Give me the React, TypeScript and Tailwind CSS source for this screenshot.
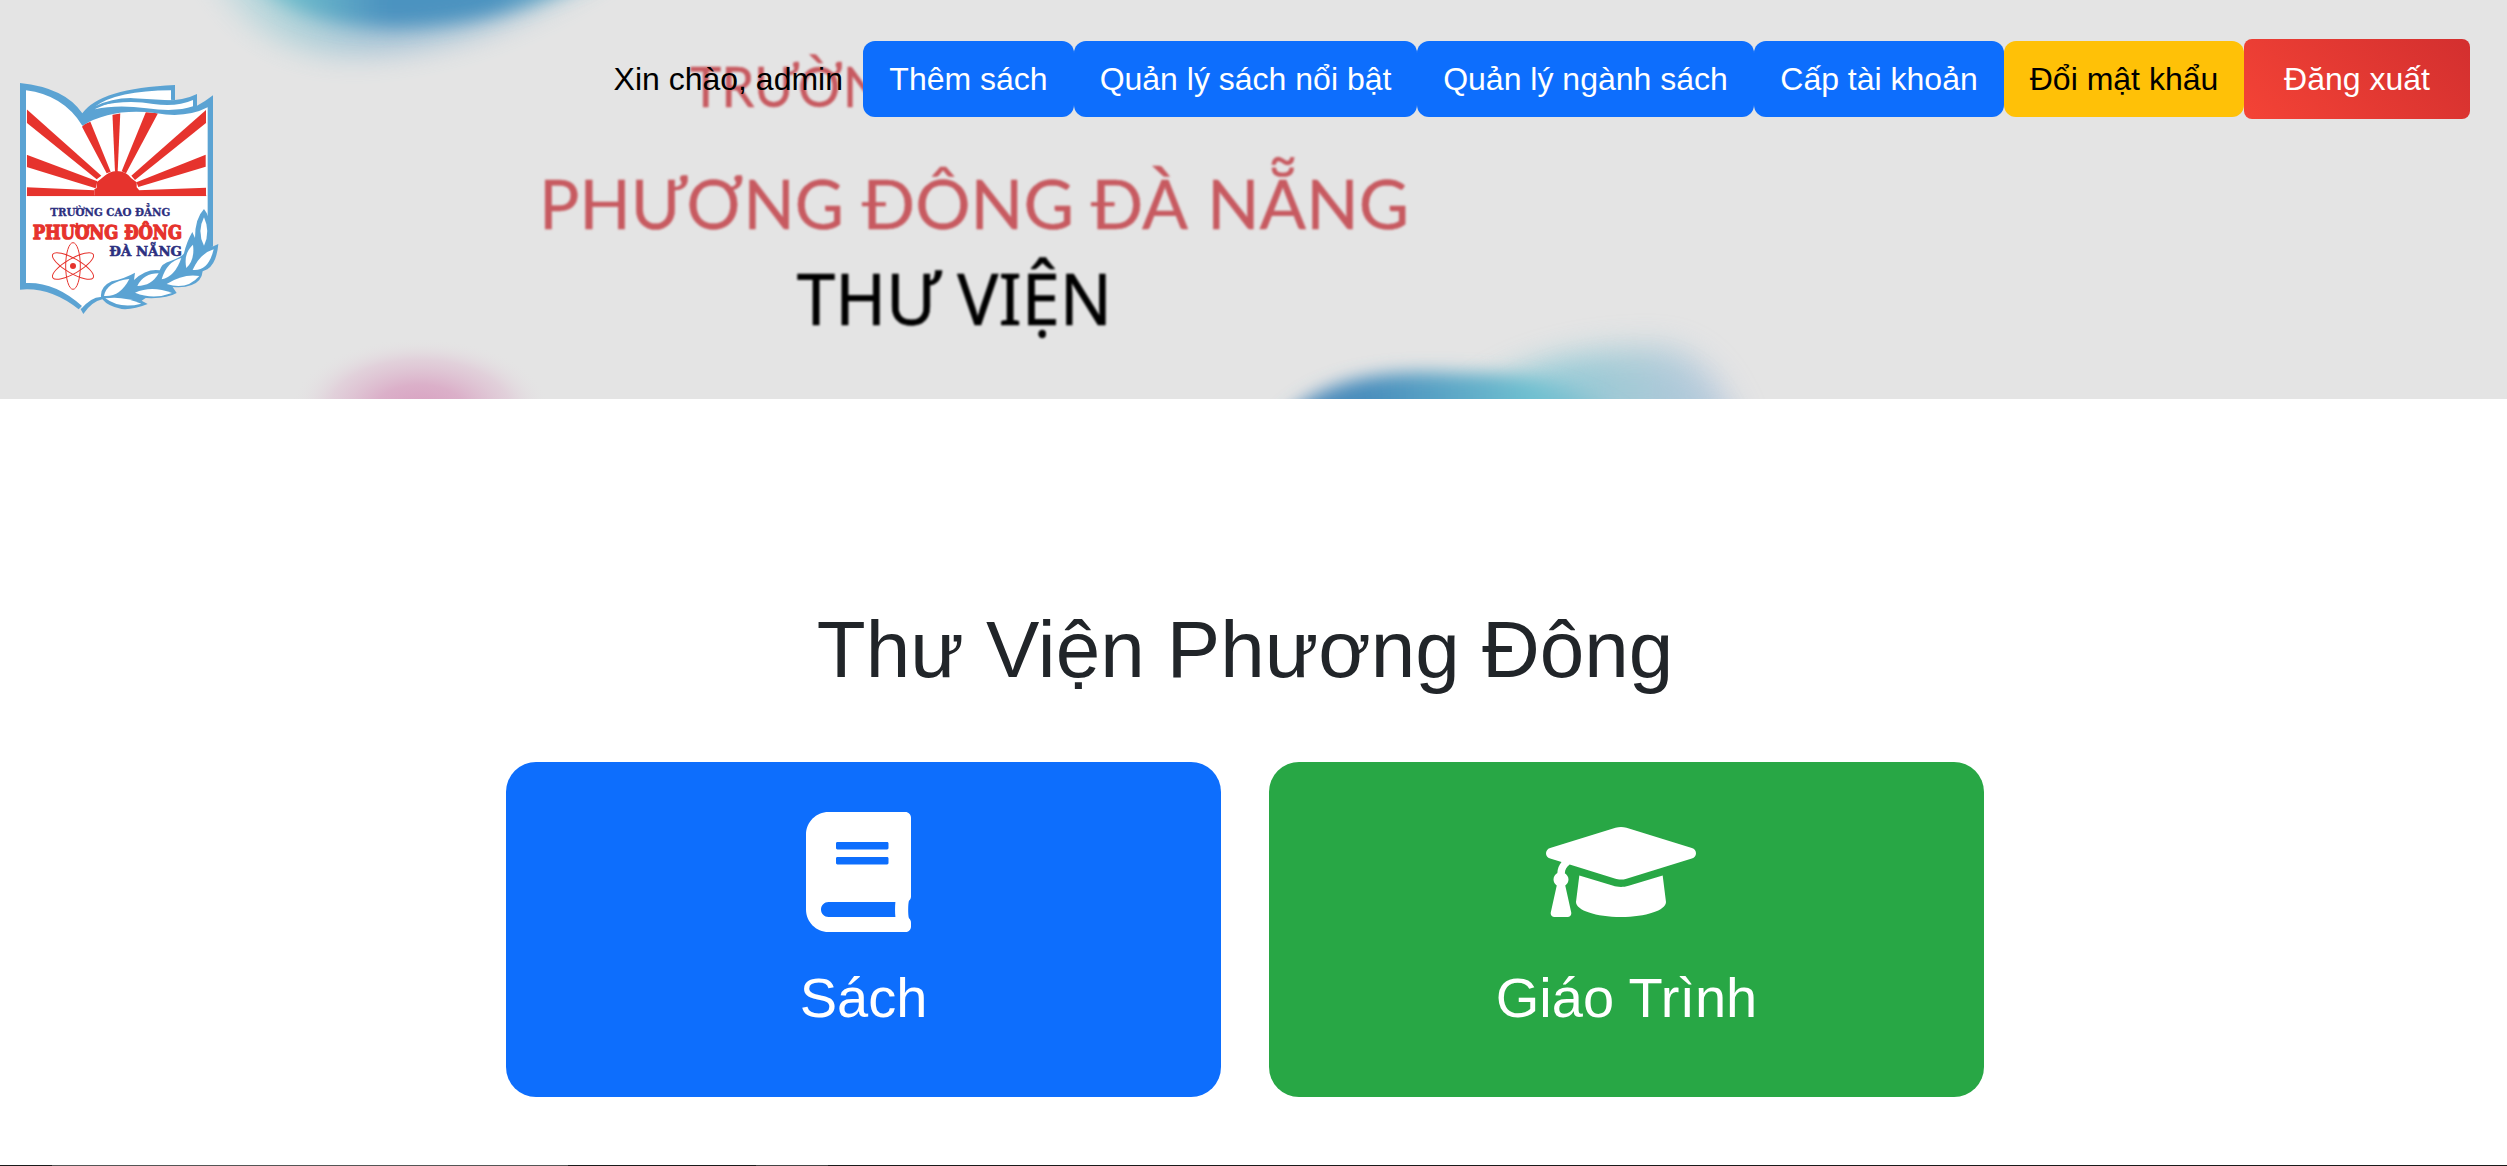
import { FaBook, FaGraduationCap } from "react-icons/fa";

const RED = "#e6332d";
const NAVY = "#2d3080";
const BLUE = "#5ba3d3";

/* Sun rays, fanning out from the half disc at the bottom of the sky */
const RAYS = [
  "M80 148 L80 188 L290 358 L304 347 Z",
  "M80 284 L80 321 L287 385 L292 364 Z",
  "M80 382 L80 409 L283 409 L283 391 Z",
  "M246 200 L268 178 L332 335 L320 340 Z",
  "M337 155 L361 155 L353 335 L345 335 Z",
  "M438 155 L474 160 L378 340 L365 334 Z",
  "M618 150 L618 189 L405 360 L394 347 Z",
  "M617 284 L617 320 L415 381 L409 367 Z",
  "M618 383 L618 409 L415 409 L415 391 Z",
];

function Logo() {
  return (
    <svg viewBox="60 60 610 710" className="h-[236.67px] w-[203.33px]">
      <defs>
        <clipPath id="sky">
          <path d="M80 92 Q190 105 247 195 Q360 140 490 162 Q560 175 620 140 V409 H80 Z" />
        </clipPath>
      </defs>
      <path d="M250 160 Q320 85 513 90 V125 Q570 125 580 120 V140 L600 150 Q430 180 250 170 Z" fill="#fff" />
      <path d="M68 80 Q190 90 246 180 Q370 130 480 157 Q570 170 630 122 V500 L610 620 L480 690 L300 715 L248 745 Q150 670 68 678 Z" fill="#fff" />
      <g clipPath="url(#sky)" fill={RED}>
        {RAYS.map((d) => (
          <path key={d} d={d} />
        ))}
        <path d="M283 409 V388 L290 384 V367 L305 355 Q328 333 350 333 Q378 333 394 355 L410 367 V382 L417 390 V409 Z" />
        <rect x="80" y="406" width="540" height="4" />
      </g>
      {/* book outline */}
      <path d="M60 69 Q195 83 247 160 Q300 85 525 75 V121 L513 119 V91 Q350 92 285 140 Q370 110 450 120 Q540 128 591 102 V137 Q615 125 639 106 V560 H623 V142 Q560 175 470 160 Q340 142 247 197 Q190 105 78 91 V669 Q165 665 246 738 L236 748 Q150 680 60 689 Z" fill={BLUE} />
      <path d="M295 138 Q380 118 460 132 Q530 142 579 120 V139 Q530 157 440 145 Q350 133 285 148 Z" fill="#fff" />
      <path d="M285 143 Q340 116 400 118 L520 125" fill="none" stroke={BLUE} strokeWidth="7" />
      {/* laurel branch */}
      <path d="M242 748 Q275 710 303 711 Q300 680 335 664 Q375 655 405 638 L402 660 Q440 625 479 631 Q485 610 512 603 Q548 590 552 580 Q560 545 577 516 L585 534 Q585 475 612 447 Q630 470 628 500 Q640 530 635 561 L655 552 Q650 610 622 628 L608 634 Q605 665 575 675 Q550 685 518 681 L530 699 Q500 717 437 714 L425 722 L443 732 Q400 750 365 747 Q325 740 307 718 Q275 725 250 762 Z" fill={BLUE} />
      <g fill="#fff">
        <path d="M612 472 Q632 515 612 557 Q590 515 612 472 Z" />
        <path d="M579 554 Q585 600 559 624 Q550 580 579 554 Z" />
        <path d="M641 568 Q600 580 578 630 Q625 635 641 568 Z" />
        <path d="M544 594 Q500 605 485 658 Q525 650 544 594 Z" />
        <path d="M598 648 Q550 640 500 672 Q560 692 598 648 Z" />
        <path d="M476 640 Q430 640 412 678 Q455 678 476 640 Z" />
        <path d="M388 657 Q320 665 312 708 Q360 712 388 657 Z" />
        <path d="M516 699 Q455 675 405 698 Q460 720 516 699 Z" />
        <path d="M424 731 Q370 707 316 715 Q360 748 424 731 Z" />
      </g>
      {/* atom */}
      <g fill="none" stroke={RED} strokeWidth="3">
        <ellipse cx="219" cy="618" rx="22" ry="70" />
        <ellipse cx="219" cy="618" rx="22" ry="70" transform="rotate(60 219 618)" />
        <ellipse cx="219" cy="618" rx="22" ry="70" transform="rotate(-60 219 618)" />
      </g>
      <circle cx="219" cy="618" r="9" fill={RED} />
      <g fontFamily="'DejaVu Serif', serif" fontWeight="700">
        <text x="151" y="469" fontSize="34" fill={NAVY} stroke={NAVY} strokeWidth="1" textLength="360" lengthAdjust="spacingAndGlyphs">TRƯỜNG CAO ĐẲNG</text>
        <text x="98" y="536" fontSize="58" fill={RED} stroke={RED} strokeWidth="4" strokeLinejoin="round" textLength="448" lengthAdjust="spacingAndGlyphs">PHƯƠNG ĐÔNG</text>
        <text x="328" y="587" fontSize="38" fill={NAVY} stroke={NAVY} strokeWidth="1.5" textLength="218" lengthAdjust="spacingAndGlyphs">ĐÀ NẴNG</text>
      </g>
    </svg>
  );
}

function BannerArt() {
  return (
    <svg viewBox="0 0 2507 399" className="absolute inset-0 h-full w-full" aria-hidden="true">
      <defs>
        <linearGradient id="top" x1="200" x2="610" y1="0" y2="0" gradientUnits="userSpaceOnUse">
          <stop offset="0" stopColor="#a5d5dc" />
          <stop offset="0.22" stopColor="#6fbccb" />
          <stop offset="0.45" stopColor="#4c93c0" />
          <stop offset="0.72" stopColor="#4c93c0" />
          <stop offset="1" stopColor="#74b8cc" />
        </linearGradient>
        <linearGradient id="bottom" x1="1280" x2="1740" y1="0" y2="0" gradientUnits="userSpaceOnUse">
          <stop offset="0" stopColor="#4a84b8" />
          <stop offset="0.2" stopColor="#4a8fbd" />
          <stop offset="0.55" stopColor="#6fc0d0" />
          <stop offset="0.75" stopColor="#93c3d2" />
          <stop offset="1" stopColor="#b0c1dc" />
        </linearGradient>
        <radialGradient id="pink">
          <stop offset="0" stopColor="#d89fc0" />
          <stop offset="0.35" stopColor="#dbb0c9" />
          <stop offset="0.7" stopColor="#e0cad7" stopOpacity="0.75" />
          <stop offset="1" stopColor="#e4e4e4" stopOpacity="0" />
        </radialGradient>
        <filter id="soft" x="-30%" y="-60%" width="160%" height="220%">
          <feGaussianBlur stdDeviation="9" />
        </filter>
        <filter id="softer" x="-30%" y="-60%" width="160%" height="220%">
          <feGaussianBlur stdDeviation="15" />
        </filter>
        <filter id="text" x="-5%" y="-20%" width="110%" height="140%">
          <feGaussianBlur stdDeviation="0.9" />
        </filter>
      </defs>
      <path d="M205 -40 C235 20 280 54 360 53 C450 48 530 20 620 -40 Z" fill="url(#top)" opacity="0.45" filter="url(#softer)" />
      <path d="M230 -50 C265 10 320 27 400 27 C470 24 530 10 620 -35 Z" fill="url(#top)" filter="url(#soft)" />
      <ellipse cx="420" cy="410" rx="130" ry="72" fill="url(#pink)" />
      <path d="M1440 440 C1470 375 1560 345 1660 346 C1700 350 1725 380 1745 440 Z" fill="url(#bottom)" opacity="0.6" filter="url(#softer)" />
      <path d="M1480 440 C1500 390 1580 366 1640 366 C1680 366 1710 390 1725 440 Z" fill="url(#bottom)" opacity="0.5" filter="url(#softer)" />
      <path d="M1265 440 C1315 368 1400 370 1480 374 C1560 382 1610 400 1640 440 Z" fill="url(#bottom)" filter="url(#soft)" />
      <g filter="url(#text)">
        <g fill="#c75a60" fontFamily="Lato, sans-serif" fontWeight="400" stroke="#c75a60" strokeWidth="0.4">
          <text x="690" y="107" fontSize="56" textLength="232" lengthAdjust="spacingAndGlyphs">TRƯỜNG</text>
          <g fontSize="67">
            <text x="539" y="229" textLength="305" lengthAdjust="spacingAndGlyphs">PHƯƠNG</text>
            <text x="862" y="229" textLength="212" lengthAdjust="spacingAndGlyphs">ĐÔNG</text>
            <text x="1091" y="229" textLength="97" lengthAdjust="spacingAndGlyphs">ĐÀ</text>
            <text x="1207" y="229" textLength="202" lengthAdjust="spacingAndGlyphs">NẴNG</text>
          </g>
        </g>
        <text x="797" y="325" fontSize="71" fontFamily="'Noto Sans', sans-serif" stroke="#000" strokeWidth="0.6" textLength="315" lengthAdjust="spacingAndGlyphs">THƯ VIỆN</text>
      </g>
    </svg>
  );
}

const ACTIONS = [
  { label: "Thêm sách", className: "w-[211px] bg-[#0d6efd] text-white" },
  { label: "Quản lý sách nổi bật", className: "w-[343px] bg-[#0d6efd] text-white" },
  { label: "Quản lý ngành sách", className: "w-[337px] bg-[#0d6efd] text-white" },
  { label: "Cấp tài khoản", className: "w-[250px] bg-[#0d6efd] text-white" },
  { label: "Đổi mật khẩu", className: "w-[240px] bg-[#ffc107] text-black" },
];

function Header() {
  return (
    <header className="relative h-[399px] overflow-hidden bg-[#e4e4e4]">
      <BannerArt />
      <div className="relative flex items-start justify-between pl-5 pr-[37px]">
        <div className="pt-20">
          <Logo />
        </div>
        <nav className="flex items-center pt-[39px] text-[32px] leading-[48px]">
          <span className="mr-5 text-black">Xin chào, admin</span>
          {ACTIONS.map((a) => (
            <button key={a.label} className={`h-[76px] whitespace-nowrap rounded-xl ${a.className}`}>
              {a.label}
            </button>
          ))}
          <button className="h-20 w-[226px] whitespace-nowrap rounded-[8px] bg-linear-45 from-[#f44336] to-[#d32f2f] text-white">
            Đăng xuất
          </button>
        </nav>
      </div>
    </header>
  );
}

export default function App() {
  return (
    <div className="flex h-[1166px] w-[2507px] flex-col overflow-hidden bg-white font-['Liberation_Sans',Arial,sans-serif]">
      <Header />
      <main className="flex w-[2490px] grow flex-col items-center pt-[203px]">
        <h1 className="text-[80px] leading-[96px] text-[#212529]">Thư Viện Phương Đông</h1>
        <div className="mt-16 grid grid-cols-2 gap-12">
          <a className="flex h-[335px] w-[715px] flex-col items-center rounded-[30px] bg-[#0d6efd] pt-[50px] text-white">
            <FaBook className="mr-[10px] h-[120px] w-[105px]" />
            <span className="mt-8 text-[56px] leading-[67px]">Sách</span>
          </a>
          <a className="flex h-[335px] w-[715px] flex-col items-center rounded-[30px] bg-[#28a745] pt-[50px] text-white">
            <FaGraduationCap className="mr-[11px] h-[120px] w-[150px]" />
            <span className="mt-8 text-[56px] leading-[67px]">Giáo Trình</span>
          </a>
        </div>
      </main>
      <div className="flex h-px bg-[#1a1a1a]">
        <div className="ml-[52px] w-[516px] bg-[#555]" />
        <div className="ml-[188px] w-[72px] bg-[#444]" />
      </div>
    </div>
  );
}
